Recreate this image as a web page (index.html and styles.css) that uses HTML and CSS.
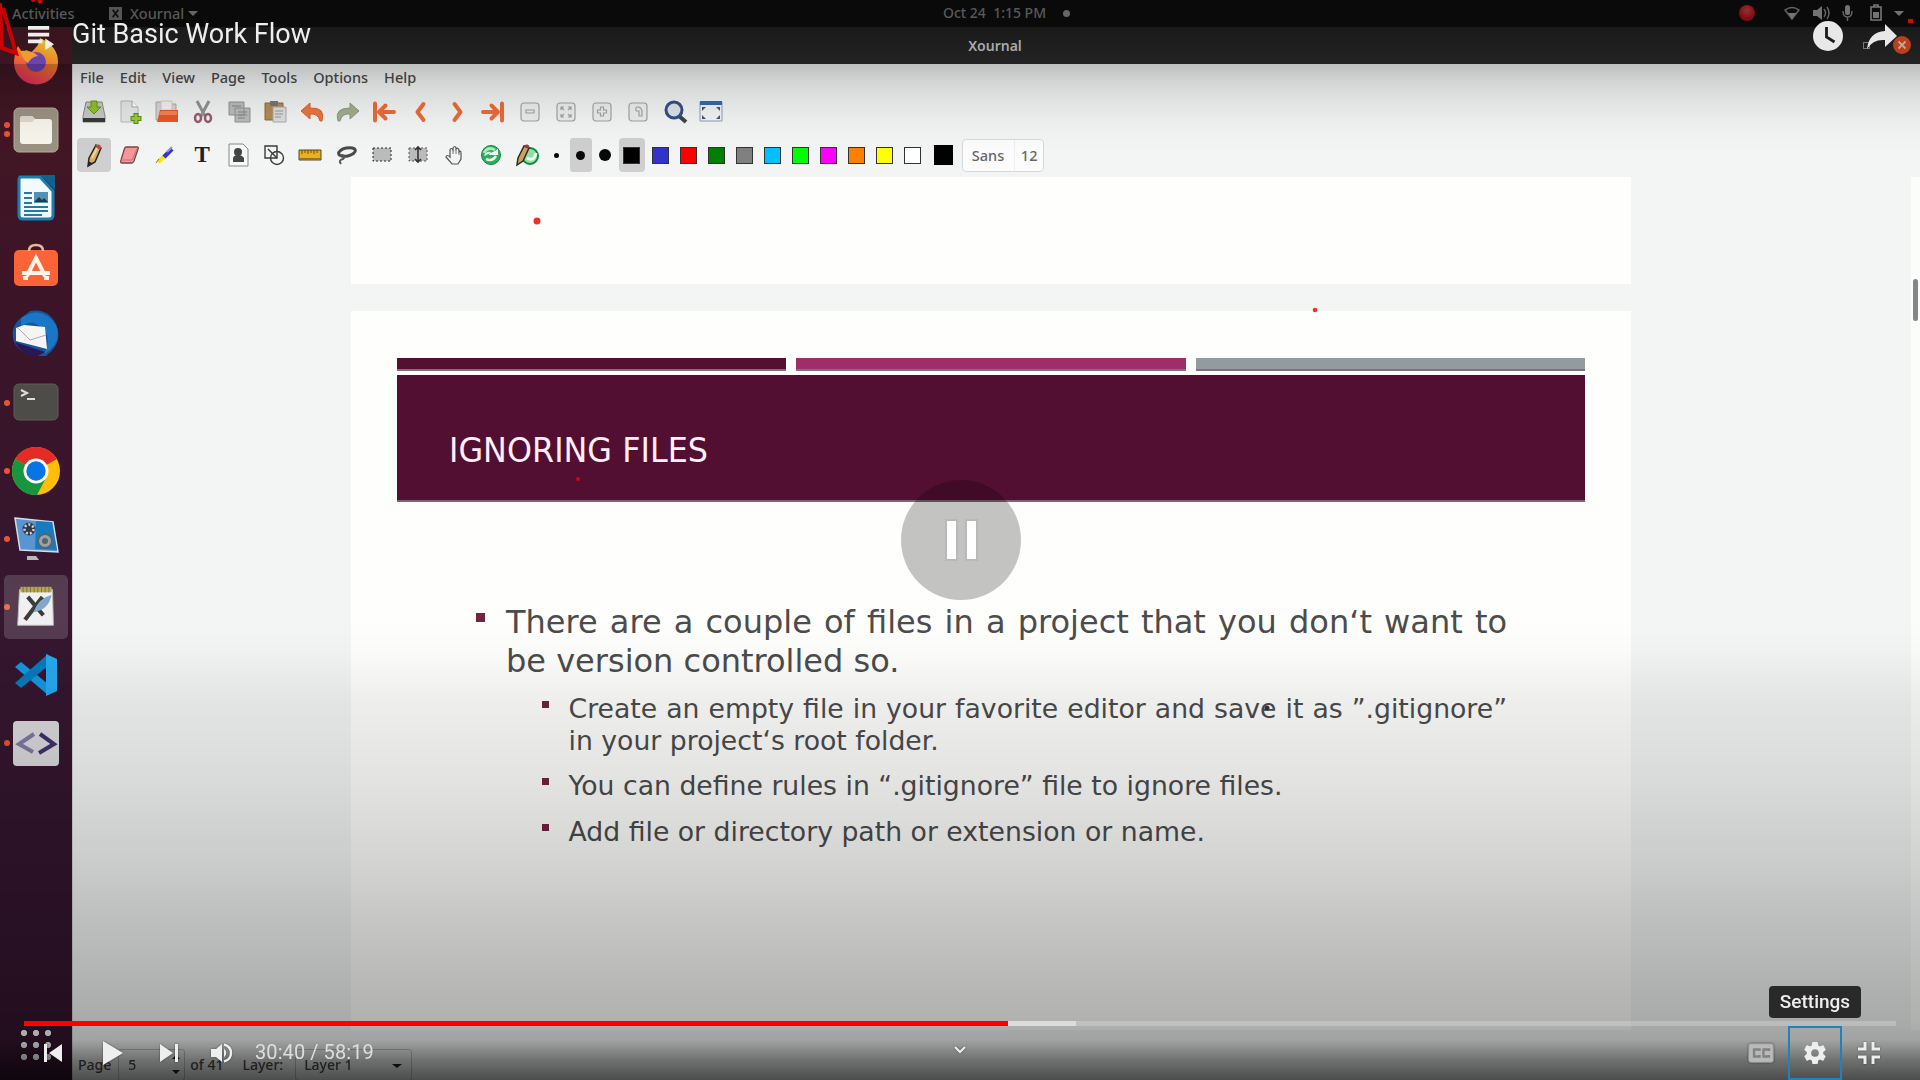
FILE: index.html
```
<!DOCTYPE html>
<html lang="en">
<head>
<meta charset="utf-8">
<title>Git Basic Work Flow</title>
<link rel="stylesheet" href="styles.css">
</head>
<body>
<div class="player">
<div class="desktop">
  <div class="topbar">
    <span class="activities">Activities</span>
    <svg class="appmark" viewBox="0 0 14 14"><rect width="14" height="14" fill="#555"/><path d="M4 3l6 8M10 3l-6 8" stroke="#111" stroke-width="2"/></svg>
    <span class="appname">Xournal</span><i class="caret"></i>
    <span class="date">Oct 24&nbsp; 1:15 PM</span><i class="notify"></i>
    <svg class="tray" viewBox="0 0 180 26">
      <defs><radialGradient id="rec" cy=".35"><stop offset="0" stop-color="#96322f"/><stop offset="1" stop-color="#7c0c18"/></radialGradient></defs>
      <circle cx="17" cy="13" r="8" fill="url(#rec)"/>
      <g fill="#737373" stroke="none"><path d="M55 10q7-5 14 0l-7 9z" fill="none" stroke="#666" stroke-width="1.5"/><path d="M58 13h8l-4 6z"/>
      <path d="M83 10h4l5-4v14l-5-4h-4z"/><path d="M94 9q3 4 0 8M97 7q4 6 0 12" fill="none" stroke="#666" stroke-width="1.4"/>
      <rect x="115" y="5" width="5" height="10" rx="2.5"/><path d="M113 11q0 6 4.500 6t4.500-6M117.500 17v4" fill="none" stroke="#666" stroke-width="1.400"/>
      <path d="M141 7h10v13h-10zM144 5h4v2h-4z" fill="none" stroke="#777" stroke-width="1.600"/><rect x="143" y="12" width="6" height="6"/>
      <path d="M164 11h10l-5 5z"/></g>
    </svg>
  </div>
  <div class="workspace">
    <nav class="dock">
      <div class="app"><svg viewBox="0 0 48 48"><defs><linearGradient id="fx" x1=".7" x2=".3" y2="1"><stop offset="0" stop-color="#dcc633"/><stop offset=".45" stop-color="#f07d25"/><stop offset="1" stop-color="#e02461"/></linearGradient></defs><path d="M6 8l4 6 5-2 3 4 8-9 2-7q18 8 18 24a22 22 0 0 1-44 1q0-9 4-17z" fill="url(#fx)"/><circle cx="24" cy="24" r="10" fill="#6c43b1"/><path d="M8 13q13-1 18 5-7 1-10 7-4-2-8-12" fill="#ed9b32"/></svg></div>
      <div class="app run2"><svg viewBox="0 0 48 48"><rect x="2" y="2" width="44" height="44" rx="5" fill="#9b9283" stroke="#b5ad9d"/><path d="M8 13q0-3 3-3h9l3 3h14q3 0 3 3v19q0 3-3 3H11q-3 0-3-3z" fill="#f7f4ec"/><path d="M8 13q0-3 3-3h9l3 3-3 3H8z" fill="#ded8ca"/></svg></div>
      <div class="app"><svg viewBox="0 0 48 48"><path d="M8 3h20l13 14v24q0 4-4 4H11q-4 0-4-4V5z" fill="#f4fafc" stroke="#187fae" stroke-width="3"/><path d="M28 1h15v15z" fill="#11618b"/><path d="M12 19h8M12 24h8M12 29h8M12 33h24M12 37h24M12 41h18" stroke="#207ba5" stroke-width="2"/><rect x="22" y="18" width="14" height="11" fill="#5392b6"/><path d="M22 28l5-5 3 3 2-2 4 4z" fill="#263b43"/></svg></div>
      <div class="app"><svg viewBox="0 0 48 48"><rect x="2" y="8" width="44" height="36" rx="5" fill="#fa6436"/><path d="M17 9q0-6 7-6t7 6" fill="none" stroke="#e6b798" stroke-width="2.500"/><path d="M15 34l9-18 9 18M10 31h28M16 36h-5M37 36h-5" fill="none" stroke="#fff2e7" stroke-width="4"/></svg></div>
      <div class="app"><svg viewBox="0 0 48 48"><path d="M18 1Q36-2 44 14q8 19-10 32H22Q-2 40 1 20q2-8 8-12z" fill="#17559f"/><path d="M9 8Q30-6 44 15q7 18-12 29 11-22-10-31-8-1-13 5z" fill="#1977c5"/><path d="M4 18l8-3 21 2 2 22-31-8z" fill="#f5f5f6"/><path d="M6 18l12 12 16-5" fill="none" stroke="#aaa"/><path d="M3 32l30 10-9 5q-16-3-21-15" fill="#291858"/></svg></div>
      <div class="app run"><svg viewBox="0 0 48 48"><rect x="2" y="5" width="44" height="36" rx="5" fill="#4d4c49" stroke="#5e5c58"/><path d="M9 11l6 3-6 3M15 20h8" fill="none" stroke="#ddd" stroke-width="2"/></svg></div>
      <div class="app run"><svg viewBox="0 0 48 48"><circle cx="24" cy="24" r="24" fill="#ffbf08"/><path d="M24 24L3.200 12A24 24 0 0 1 44.800 12z" fill="#e42b25"/><path d="M24 24L3.200 12A24 24 0 0 0 25 48l9-17z" fill="#15963f"/><circle cx="24" cy="24" r="12.500" fill="#fff"/><circle cx="24" cy="24" r="9.700" fill="#0875e4"/></svg></div>
      <div class="app run"><svg viewBox="0 0 48 48"><path d="M3 3l38 4 5 30-38-2z" fill="#5796d3" stroke="#d3dce9" stroke-width="1.500"/><path d="M24 6l16 1 5 28-22-1z" fill="#187bc0"/><circle cx="17" cy="14" r="6.500" fill="#333b44"/><circle cx="17" cy="14" r="4.500" fill="none" stroke="#ccd5df" stroke-width="2.500" stroke-dasharray="2"/><circle cx="33" cy="26" r="7" fill="#9ba3a7" stroke="#536672" stroke-width="2"/><circle cx="33" cy="26" r="3" fill="#56646d"/><path d="M15 41h9l3 4H15z" fill="#bbb5bc"/></svg></div>
      <div class="app run selected"><svg viewBox="0 0 48 48"><path d="M6 5h36l1 39H4z" fill="#eee" stroke="#aaa"/><path d="M7 2h34v6H7z" fill="#ab9630"/><path d="M10 2v6M14 2v6M18 2v6M22 2v6M26 2v6M30 2v6M34 2v6M38 2v6" stroke="#655718"/><path d="M15 13l17 20M31 13L12 38" stroke="#171717" stroke-width="4.500"/><path d="M41 11q-14 3-20 19 17-3 20-19" fill="#6b97c0"/></svg></div>
      <div class="app"><svg viewBox="0 0 48 48"><path d="M3 16l6-5 27 22v11z" fill="#1597e0"/><path d="M3 32l6 5 27-22V3z" fill="#087abc"/><path d="M34 3l11 5v32l-11 5z" fill="#28a9ef"/></svg></div>
      <div class="app run"><svg viewBox="0 0 48 48"><rect x="1" y="2" width="46" height="45" rx="4" fill="#d9d9dc"/><path d="M22 15L7 25l14 8" fill="none" stroke="#8178a3" stroke-width="4"/><path d="M28 15l14 10-15 9" fill="none" stroke="#40316f" stroke-width="4"/></svg></div>
      <div class="grid-dots"></div>
    </nav>
    <main class="window">
      <header class="titlebar"><span>Xournal</span><i class="winbtn max"></i><i class="winbtn close"><svg viewBox="0 0 18 18"><path d="M5.500 5.500l7 7m0-7l-7 7" stroke="#c4a79b" stroke-width="1.800"/></svg></i></header>
      <div class="menu"><span>File</span><span>Edit</span><span>View</span><span>Page</span><span>Tools</span><span>Options</span><span>Help</span></div>
      <div class="tools">
        <svg viewBox="0 0 28 28"><path d="M6 4h16l3 14v6H3v-6z" fill="#c5c8c3" stroke="#888"/><path d="M3 20h22v4H3z" fill="#363936"/><path d="M11 3h6v6h4l-7 7-7-7h4z" fill="#8dc328" stroke="#63951c"/></svg>
        <svg viewBox="0 0 28 28"><path d="M5 3h11l6 6v15H5z" fill="#e4e7e5" stroke="#b5b9b6"/><path d="M16 3v6h6" fill="#fff" stroke="#aaa"/><path d="M20 15v11M14.500 20.500h11" stroke="#578d19" stroke-width="5"/><path d="M20 16v9M15.500 20.500h9" stroke="#9dc931" stroke-width="3"/></svg>
        <svg viewBox="0 0 28 28"><path d="M3 4h6l2 2h12v16H3z" fill="#d9d2ce" stroke="#aaa"/><path d="M8 3h11v9H8z" fill="#f2f2f2" stroke="#ccc"/><path d="M7 12h18v12H4z" fill="#e85727"/><path d="M8 13h16v4H6z" fill="#f2844e"/></svg>
        <svg viewBox="0 0 28 28"><path d="M8 3l8 15M20 3l-8 15" stroke="#929292" stroke-width="3"/><ellipse cx="9" cy="20" rx="3" ry="4" fill="none" stroke="#985d70" stroke-width="2.500"/><ellipse cx="19" cy="20" rx="3" ry="4" fill="none" stroke="#985d70" stroke-width="2.500"/></svg>
        <svg viewBox="0 0 28 28"><path d="M4 4h15v13H4zM10 10h15v14H10z" fill="#bbb" stroke="#929292"/><path d="M7 8h9M13 14h9M13 17h9M13 20h7" stroke="#858585"/></svg>
        <svg viewBox="0 0 28 28"><path d="M4 5h18v17H4z" fill="#b68b53" stroke="#886a47"/><path d="M9 3h8v5H9z" fill="#777"/><path d="M12 9h13v15H12z" fill="#ddd" stroke="#aaa"/><path d="M14 13h8M14 16h8M14 19h6" stroke="#999"/></svg>
        <svg viewBox="0 0 28 28"><path d="M12 5L3 13l9 8v-5q8-1 10 7h2q4-14-12-13z" fill="#ec7540" stroke="#d9622e"/></svg>
        <svg viewBox="0 0 28 28"><path d="M16 5l9 8-9 8v-5q-8-1-10 7H4Q0 10 16 10z" fill="#a1ad90" stroke="#8c997d"/></svg>
        <svg viewBox="0 0 28 28" class="orange"><path d="M5 5.500v17M24 14H11M15.500 7.500L9 14l6.500 6.500"/></svg>
        <svg viewBox="0 0 28 28" class="orange"><path d="M16.500 6l-6 8 6 8"/></svg>
        <svg viewBox="0 0 28 28" class="orange"><path d="M11.500 6l6 8-6 8"/></svg>
        <svg viewBox="0 0 28 28" class="orange"><path d="M23 5.500v17M4 14h13M12.500 7.500L19 14l-6.500 6.500"/></svg>
        <svg viewBox="0 0 28 28" class="gray"><rect x="5" y="5" width="18" height="18" rx="3"/><path d="M10 12h8v3h-8z"/></svg>
        <svg viewBox="0 0 28 28" class="gray"><rect x="5" y="5" width="18" height="18" rx="3"/><path d="M9 12V9h3M19 12V9h-3M9 16v3h3M19 16v3h-3M9 9l3 3M19 9l-3 3M9 19l3-3M19 19l-3-3"/></svg>
        <svg viewBox="0 0 28 28" class="gray"><rect x="5" y="5" width="18" height="18" rx="3"/><path d="M12.500 9h3v3h3v3h-3v3h-3v-3h-3v-3h3z"/></svg>
        <svg viewBox="0 0 28 28" class="gray"><rect x="5" y="5" width="18" height="18" rx="3"/><path d="M12 13q-1-4 2-4t4 4v5h-3v-5h-3"/></svg>
        <svg viewBox="0 0 28 28"><path d="M18 18l7 6" stroke="#42443e" stroke-width="4"/><circle cx="13" cy="12" r="8" fill="#dce2e8" stroke="#354f8b" stroke-width="3"/></svg>
        <svg viewBox="0 0 28 28"><path d="M3 4h22v19H3z" fill="#f3f4f4" stroke="#82a1c9"/><path d="M3 3h22v4H3z" fill="#3868b1"/><path d="M5 13V9h4zM23 13V9h-4zM5 17v4h4zM23 17v4h-4z" fill="#555"/></svg>
      </div>
      <div class="tools pens">
        <b class="cell active pencil"><svg viewBox="0 0 28 28"><path d="M9 17L16 4l5 3-6 14-7 4z" fill="#daae64" stroke="#242424" stroke-width="1.500"/><path d="M16 4q5-2 5 3l-1 2-5-3z" fill="#bc4845"/><path d="M12 17l5-10" stroke="#f2d597" stroke-width="2"/><path d="M8 20l4 2-4 3z" fill="#222"/></svg></b>
        <svg viewBox="0 0 28 28"><path d="M10 6h11q2 0 1 2l-4 12q-1 2-2 2H6q-2 0-1-3l3-10q1-3 2-3z" fill="#f59699" stroke="#74474a" stroke-width="1.300"/><path d="M5 19h11l5-11" fill="none" stroke="#d96972"/></svg>
        <svg viewBox="0 0 28 28"><path d="M6 21l7-6" stroke="#f4e61b" stroke-width="4.500"/><path d="M12 16l8-8" stroke="#3733ce" stroke-width="4.500"/><path d="M15 11l5-5" stroke="#9993e3" stroke-width="2"/><path d="M4 22l3-4" stroke="#777"/></svg>
        <b class="text-tool">T</b>
        <svg viewBox="0 0 28 28"><path d="M5 3h14l5 5v17H5z" fill="#f6f7f7" stroke="#888"/><circle cx="14" cy="11" r="4" fill="#444"/><path d="M9 21v-4q1-3 5-3t6 3v4z" fill="#444"/></svg>
        <svg viewBox="0 0 28 28" fill="none" stroke="#3b3b3b" stroke-width="1.400"><path d="M5 5h12v12H5z"/><circle cx="17" cy="17" r="6.500"/><path d="M8 8l9 9"/></svg>
        <svg viewBox="0 0 28 28"><path d="M3 9h22v10H3z" fill="#e8b11d" stroke="#57461b"/><path d="M4 18h20" stroke="#9a741d" stroke-width="2"/><path d="M6 9v4M9 9v3M12 9v4M15 9v3M18 9v4M21 9v3" stroke="#66501a"/></svg>
        <svg viewBox="0 0 28 28"><ellipse cx="15" cy="11" rx="8.500" ry="4" fill="none" stroke="#494949" stroke-width="3" transform="rotate(-12 15 11)"/><path d="M8 14q7 0 3 4-5 1-2 5" fill="none" stroke="#555" stroke-width="2"/></svg>
        <svg viewBox="0 0 28 28"><rect x="5" y="7" width="18" height="13" fill="#bbb" stroke="#222" stroke-dasharray="2"/></svg>
        <svg viewBox="0 0 28 28"><path d="M5 7h18v13H5z" fill="#bbb" stroke="#555" stroke-dasharray="2"/><path d="M14 6v15M11 9l3-3 3 3M11 18l3 3 3-3" fill="none" stroke="#333" stroke-width="1.600"/></svg>
        <svg viewBox="0 0 28 28"><path d="M10 15V9q1-3 3 0V7q2-3 3 0v1q2-2 3 1v2q2-2 2 1v6l-3 5h-6l-6-7q1-3 4 0z" fill="#f3f3f3" stroke="#555" stroke-width="1.200"/><path d="M13 9v4M16 8v5M19 11v3" stroke="#777"/></svg>
        <svg viewBox="0 0 28 28"><circle cx="14" cy="14" r="9.500" fill="#2dae5b" stroke="#168641"/><path d="M7 12q4-7 11-3" fill="none" stroke="#a6ebbd" stroke-width="3"/><path d="M7 15q2-5 7-4l-2 3h9V8l-3 2" fill="#fafffb"/><path d="M9 18q6 3 10-3" fill="none" stroke="#eafff0" stroke-width="2.500"/></svg>
        <svg viewBox="0 0 28 28"><circle cx="17" cy="15" r="8" fill="#8ce1a7" stroke="#138740" stroke-width="2"/><path d="M14 17q7 4 9-5" fill="none" stroke="#f5fff6" stroke-width="3"/><path d="M5 17L11 5l5 2-6 13-6 4z" fill="#cba263" stroke="#2b2b22" stroke-width="1.500"/><path d="M11 5q5-3 5 2z" fill="#9e3737" stroke="#9e3737"/></svg>
        <b class="cell dot"><i class="d1"></i></b><b class="cell dot active"><i class="d2"></i></b><b class="cell dot"><i class="d3"></i></b>
        <div class="colors"><b class="cell active"><i class="black"></i></b><i class="blue"></i><i class="red"></i><i class="green"></i><i class="grey"></i><i class="cyan"></i><i class="lime"></i><i class="magenta"></i><i class="amber"></i><i class="yellow"></i><i class="white"></i></div>
        <i class="current"></i>
        <div class="font"><span>Sans</span><span>12</span></div>
      </div>
      <div class="canvas">
        <div class="pages">
          <div class="page previous"></div>
          <article class="page slide">
            <div class="stripes"><i></i><i></i><i></i></div>
            <h1><span>IGNORING FILES</span></h1>
            <ul class="main">
              <li><p><span class="row just">There are a couple of files in a project that you don‘t want to</span><span class="row">be version controlled so.</span></p>
              <ul>
                <li><p><span class="row just">Create an empty file in your favorite editor and save it as ”.gitignore”</span><span class="row">in your project‘s root folder.</span></p></li>
                <li><p><span class="row">You can define rules in “.gitignore” file to ignore files.</span></p></li>
                <li><p><span class="row">Add file or directory path or extension or name.</span></p></li>
              </ul></li>
            </ul>
          </article>
        </div>
        <div class="edge"><i></i></div>
      </div>
      <footer class="status"><span>Page</span><span class="spin">5<i class="up"></i><i class="down"></i></span><span class="of">of 41</span><span class="lay">Layer:</span><span class="select">Layer 1<i class="down"></i></span></footer>
    </main>
  </div>
</div>
<div class="shade"></div>
<svg class="ink" viewBox="0 0 1920 1080"><path d="M0 3L2 48L16 53L3 8" fill="none" stroke="#cb0000" stroke-width="4"/><g fill="#d20707"><circle cx="33" cy="0" r="2"/><circle cx="40" cy="1" r="2.500"/><rect x="1908" y="19" width="5" height="4"/><circle cx="578" cy="479" r="2"/></g><circle cx="537" cy="221" r="3.500" fill="#f22b2b"/><circle cx="1315" cy="310" r="2.300" fill="#f22b2b"/><circle cx="1267" cy="708" r="2.500" fill="#303030"/></svg>
<div class="overlay">
  <header class="videohead">
    <svg class="queue" viewBox="0 0 28 28"><path d="M1 2h22M1 9h22M1 16h15" stroke="#eee" stroke-width="4"/><path d="M19 13v12l9-6z" fill="#eee"/></svg>
    <span class="videotitle">Git Basic Work Flow</span>
    <svg class="later" viewBox="0 0 30 30"><circle cx="15" cy="15" r="15" fill="#e8e8e8"/><path d="M13.500 6v10l8 5" fill="none" stroke="#1b1b1b" stroke-width="2.800"/></svg>
    <svg class="share" viewBox="0 0 30 25"><path d="M18 0l12 12-12 11v-7Q6 15 0 25 2 8 18 7z" fill="#e8e8e8"/></svg>
  </header>
  <div class="pause"><svg viewBox="0 0 120 120"><path d="M45 40h11v40H45zM65 40h11v40H65z" fill="#fff" stroke="#b9b9b9" stroke-width="2"/></svg></div>
  <div class="bottom">
    <div class="tiprow"><span class="tip">Settings</span></div>
    <div class="progress"><i class="played"></i><i class="buffered"></i></div>
    <div class="controls">
      <svg class="prev" viewBox="0 0 18 18"><path d="M0 0h3v18H0zM18 0v18L5 9z"/></svg>
      <svg class="play" viewBox="0 0 20 24"><path d="M0 0l20 12L0 24z"/></svg>
      <svg class="next" viewBox="0 0 18 18"><path d="M0 0l13 9L0 18zM15 0h3v18h-3z"/></svg>
      <svg class="vol" viewBox="0 0 22 20"><path d="M0 6h5l6-5v18l-6-5H0z"/><path d="M13 5.500q4.500 4.500 0 9" /><path d="M13 1.500q7 2 7 8.500t-7 8.500" fill="none" stroke="#eee" stroke-width="2.400"/></svg>
      <span class="time">30:40 / 58:19</span>
      <svg class="chev" viewBox="0 0 12 8"><path d="M1 1l5 5 5-5" fill="none" stroke="#eee" stroke-width="2"/></svg>
      <svg class="cc" viewBox="0 0 26 20"><rect x=".7" y=".7" width="24.600" height="18.600" rx="2" fill="#b9b9b9" stroke="#949494"/><path d="M11.500 8V6.500H6v7h5.500V12M21 8V6.500h-5.500v7H21V12" fill="none" stroke="#818181" stroke-width="2.300"/></svg>
      <span class="gear"><svg viewBox="2 2 20 20"><path d="M19.430 12.980c.04-.32.07-.64.07-.98s-.03-.66-.07-.98l2.110-1.650c.19-.15.24-.42.12-.64l-2-3.460c-.12-.22-.39-.3-.61-.22l-2.490 1c-.52-.4-1.080-.73-1.690-.98l-.38-2.650C14.460 2.180 14.250 2 14 2h-4c-.25 0-.46.18-.49.42l-.38 2.650c-.61.25-1.170.59-1.690.98l-2.490-1c-.23-.09-.49 0-.61.22l-2 3.460c-.13.22-.07.49.12.64l2.110 1.650c-.04.32-.07.65-.07.98s.03.66.07.98l-2.110 1.650c-.19.15-.24.42-.12.64l2 3.460c.12.22.39.3.61.22l2.490-1c.52.4 1.080.73 1.690.98l.38 2.650c.03.24.24.42.49.42h4c.25 0 .46-.18.49-.42l.38-2.650c.61-.25 1.170-.59 1.690-.98l2.490 1c.23.09.49 0 .61-.22l2-3.460c.12-.22.07-.49-.12-.64zM12 15.500a3.500 3.500 0 1 1 0-7 3.500 3.500 0 0 1 0 7z"/></svg></span>
      <svg class="exit" viewBox="0 0 22 22"><path d="M0 7h7V0M15 0v7h7M0 15h7v7M15 22v-7h7" fill="none" stroke="#eee" stroke-width="3"/></svg>
    </div>
  </div>
</div>
</div>
</body>
</html>
```
FILE: styles.css
```
*{box-sizing:border-box}
body{margin:0;overflow:hidden;background:#000}
svg{display:block;flex:none}
.player{width:1920px;height:1080px;display:grid;overflow:hidden}
.desktop,.shade,.ink,.overlay{grid-area:1/1;width:1920px;height:1080px;min-width:0}
.desktop{isolation:isolate;z-index:0;filter:blur(.4px)}
.shade{z-index:1}
.ink{z-index:2}
.overlay{z-index:3}
.desktop{display:flex;flex-direction:column;font:15px/20px "Noto Sans",sans-serif;color:#4a4a4a}
.topbar{height:27px;flex:none;background:#0a0a0a;display:flex;align-items:center;color:#595959;font-size:14.500px;font-weight:500;padding:0 0 1px 12px}
.activities{width:97px}
.appmark{width:13px;height:13px}
.appname{margin-left:8px;width:54px}
.caret{border:5px solid transparent;border-top-color:#666;border-bottom:0;margin-left:4px}
.date{margin-left:745px;width:108px;white-space:nowrap;font-size:14px}
.notify{width:7px;height:7px;border-radius:50%;background:#666;margin-left:12px}
.tray{width:180px;height:26px;margin-left:660px}
.workspace{flex:1;display:flex;min-height:0}
.dock{width:72px;background:linear-gradient(#38141e,#431725 9%,#3c1428 25%,#35172f 55%,#33152e);flex:none}
.app{height:68.100px;display:flex;align-items:center;justify-content:center;position:relative}
.app:first-child{margin-top:1px}
.app svg{width:48px;height:48px}
.app.run::before,.app.run2::before{content:"";width:6px;height:6px;border-radius:50%;background:#e95431;position:absolute;left:4px}
.app.run2::before{margin-top:-10px;box-shadow:0 9px #e95431}
.app.selected::after{content:"";position:absolute;inset:2px 4px;background:#ffffff29;border-radius:5px}
.app.selected svg{width:44px}
.grid-dots{width:36px;height:36px;margin:253px 0 0 21px;background:radial-gradient(circle at 3px 3px,#fff 2.800px,transparent 3.500px) 0 0/12px 12px}
.window{flex:1;min-width:0;display:flex;flex-direction:column;background:#f3f5f5;border-left:1px solid #d8d5d7}
.titlebar{height:37px;flex:none;background:linear-gradient(#1a1a1a,#232323);display:flex;align-items:center;justify-content:center;color:#a9a9a9;font-size:14px;font-weight:600;position:relative;margin-left:-1px}
.titlebar>span{margin-left:-2px}
.winbtn{position:absolute;right:9px;width:18px;height:18px;border-radius:50%;background:#b8401e;top:9px}
.winbtn.max{right:50px;width:7px;height:7px;top:15px;background:none;border:1px solid #777;border-radius:0}
.menu{height:27px;flex:none;display:flex;gap:16px;padding:3px 0 0 7px;font-size:14.500px;font-weight:500}
.tools{height:42px;flex:none;display:flex;align-items:center;padding-left:7px;gap:8.300px}
.tools>svg{width:28px;height:28px}
.orange{fill:none;stroke:#ed6b38;stroke-width:4;stroke-linecap:round;stroke-linejoin:round}
.gray{fill:#eceded;stroke:#a2a2a2;stroke-width:1.200}
.pens{height:44px;gap:8.050px}
.cell{height:34px;border-radius:4px;display:flex;align-items:center;justify-content:center;flex:none}
.active{background:#cfcfcf}
.pencil{width:34px;margin:0 -3px}
.pencil svg{width:28px}
.text-tool{width:28px;text-align:center;font:bold 23px "Liberation Serif",serif;color:#222}
.dot{width:22px;border-radius:3px}
.dot i{border-radius:50%;background:#080808}
.d1{width:5px;height:5px}.d2{width:9px;height:9px}.d3{width:12px;height:12px}
.pens>.dot{margin-left:-3px;margin-right:-3px}
.colors{display:flex;align-items:center;gap:11px;margin-left:-2px}
.colors .cell{width:26px;margin-right:-4px}
.colors i{width:17px;height:17px;border:1px solid #333}
.black{background:#000}.blue{background:#3333cc}.red{background:#f00}.green{background:#008000}.grey{background:#808080}.cyan{background:#00c0ff}.lime{background:#0f0}.magenta{background:#f0f}.amber{background:#ff8000}.yellow{background:#ff0}.white{background:#fff}
.current{width:19px;height:20px;background:#000;margin-left:5px}
.font{display:flex;width:82px;height:33px;border:1px solid #d8d8d8;border-radius:4px;background:#fcfcfc;line-height:31px;font-size:14.500px;font-weight:500;margin-left:1px;color:#666}
.font span:first-child{width:52px;padding-left:9px;border-right:1px solid #eee}.font span:last-child{padding-left:6px}
.canvas{flex:1;min-height:0;display:flex;justify-content:space-between;padding-left:278px}
.pages{width:1280px;display:flex;flex-direction:column;gap:27px}
.page{background:#fefefd}
.previous{height:107px;flex:none}
.slide{flex:1;padding:47px 46px 0}
.stripes{display:flex;gap:10px;height:13px}
.stripes i{flex:1;background:#551031;border-bottom:2px solid #84707c}
.stripes i:nth-child(2){background:#9e2d68}.stripes i:nth-child(3){background:#929c9f}
h1{margin:4px 0 0;height:127px;background:#530f32;border-bottom:2px solid #806376;color:#fff0fa;font:34px/40px "DejaVu Sans",sans-serif;padding:55px 0 0 52px}
h1 span{display:block;width:max-content;transform:scaleX(.937);transform-origin:0 0}
ul{list-style:none;margin:0;padding:0}
.main{padding:101px 78px 0 109px;font:32px/39px "DejaVu Sans",sans-serif;color:#4c4c4c}
li{position:relative}
li::before{content:"";position:absolute;left:-30px;top:10px;width:9px;height:9px;background:#722342}
li li::before{left:-27px;top:8px;width:7px;height:7px}
p{margin:0}
.row{display:block;white-space:nowrap}
.just{text-align-last:justify}
.main ul{padding-left:62.500px;font-size:26.700px;line-height:32px;margin-top:12px}
.main ul li{margin-bottom:14px}
.main ul li:first-child{margin-bottom:13px}
.edge{width:9px;background:#fcfcfb;display:flex;justify-content:center;padding-top:102px}
.edge i{width:5px;height:42px;border-radius:3px;background:#858585}
.status{height:50px;flex:none;display:flex;align-items:center;padding:19px 0 0 5px;font-size:14px;font-weight:500}
.spin,.select{height:32px;border:1px solid #c1c3c3;border-radius:3px;line-height:30px;position:relative;padding-left:9px}
.spin{width:67px;margin-left:7px}.of{margin-left:5px}.lay{margin-left:19px}.select{width:117px;margin-left:12px;padding-left:8px}
.up,.down{position:absolute;right:4px;top:20px;border:4px solid transparent;border-top-color:#222;border-bottom:0}.select .down{right:9px;top:14px;border-left-width:5px;border-right-width:5px}.spin .up{top:5px;border-bottom:4px solid #222;border-top:0}
.shade{background:linear-gradient(#0000 620px,#00000003 650px,#00000010 700px,#0000001b 780px,#0000002a 860px,#00000041 960px,#0000004d 1020px,#00000056 1040px,#0000008a 1060px,#000000b0 1080px),linear-gradient(transparent 64px,#00000038 64px,#0000001f 84px,#0000000e 108px,#00000004 130px,transparent 155px)}
.overlay{display:grid;grid-template-rows:70px 1fr 98px;font-family:Roboto,sans-serif;color:#eee}
.videohead{display:flex;align-items:flex-start;padding:20px 23px 0 27px}
.queue{width:27px;height:27px;margin-top:6px}
.videotitle{font-size:27px;line-height:30px;margin:-1px auto 0 18px}
.later{width:30px;height:30px;margin-top:1px}.share{width:30px;height:25px;margin:4px 0 0 24px}
.pause{width:120px;height:120px;border-radius:50%;background:#0000003b;justify-self:center;align-self:start;margin:410px 0 0 2px}
.bottom{display:flex;flex-direction:column}
.tiprow{height:39px;display:flex;padding:4px 59px 0;justify-content:flex-end}
.tip{height:32px;width:92px;text-align:center;border-radius:4px;background:#292929;font-size:19px;line-height:31px;font-weight:500}
.progress{height:5px;margin:0 24px;display:flex;background:#ffffff35}
.played{width:984px;background:#f00}.buffered{width:68px;background:#ffffff70}
.controls{height:54px;display:flex;align-items:center;fill:#eee;padding-left:44px}
.controls>svg{filter:drop-shadow(0 0 1px #0007)}
.prev,.next{width:18px;height:18px}.play{width:20px;height:24px;margin-left:41px}.next{margin-left:37px}.vol{width:22px;height:20px;margin-left:33px}
.time{font-size:20px;line-height:24px;margin-left:22px;width:130px;color:#ddd;white-space:nowrap;margin-top:-2px;letter-spacing:.08px}
.chev{width:12px;height:8px;margin:-6px 0 0 569px}
.cc{width:26px;height:20px;margin-left:782px}.gear{width:54px;height:54px;border:2px solid #2281ba;display:grid;place-items:center;margin-left:14px}.gear svg{width:22px;height:22px}.exit{width:22px;height:22px;margin-left:16px}
```
